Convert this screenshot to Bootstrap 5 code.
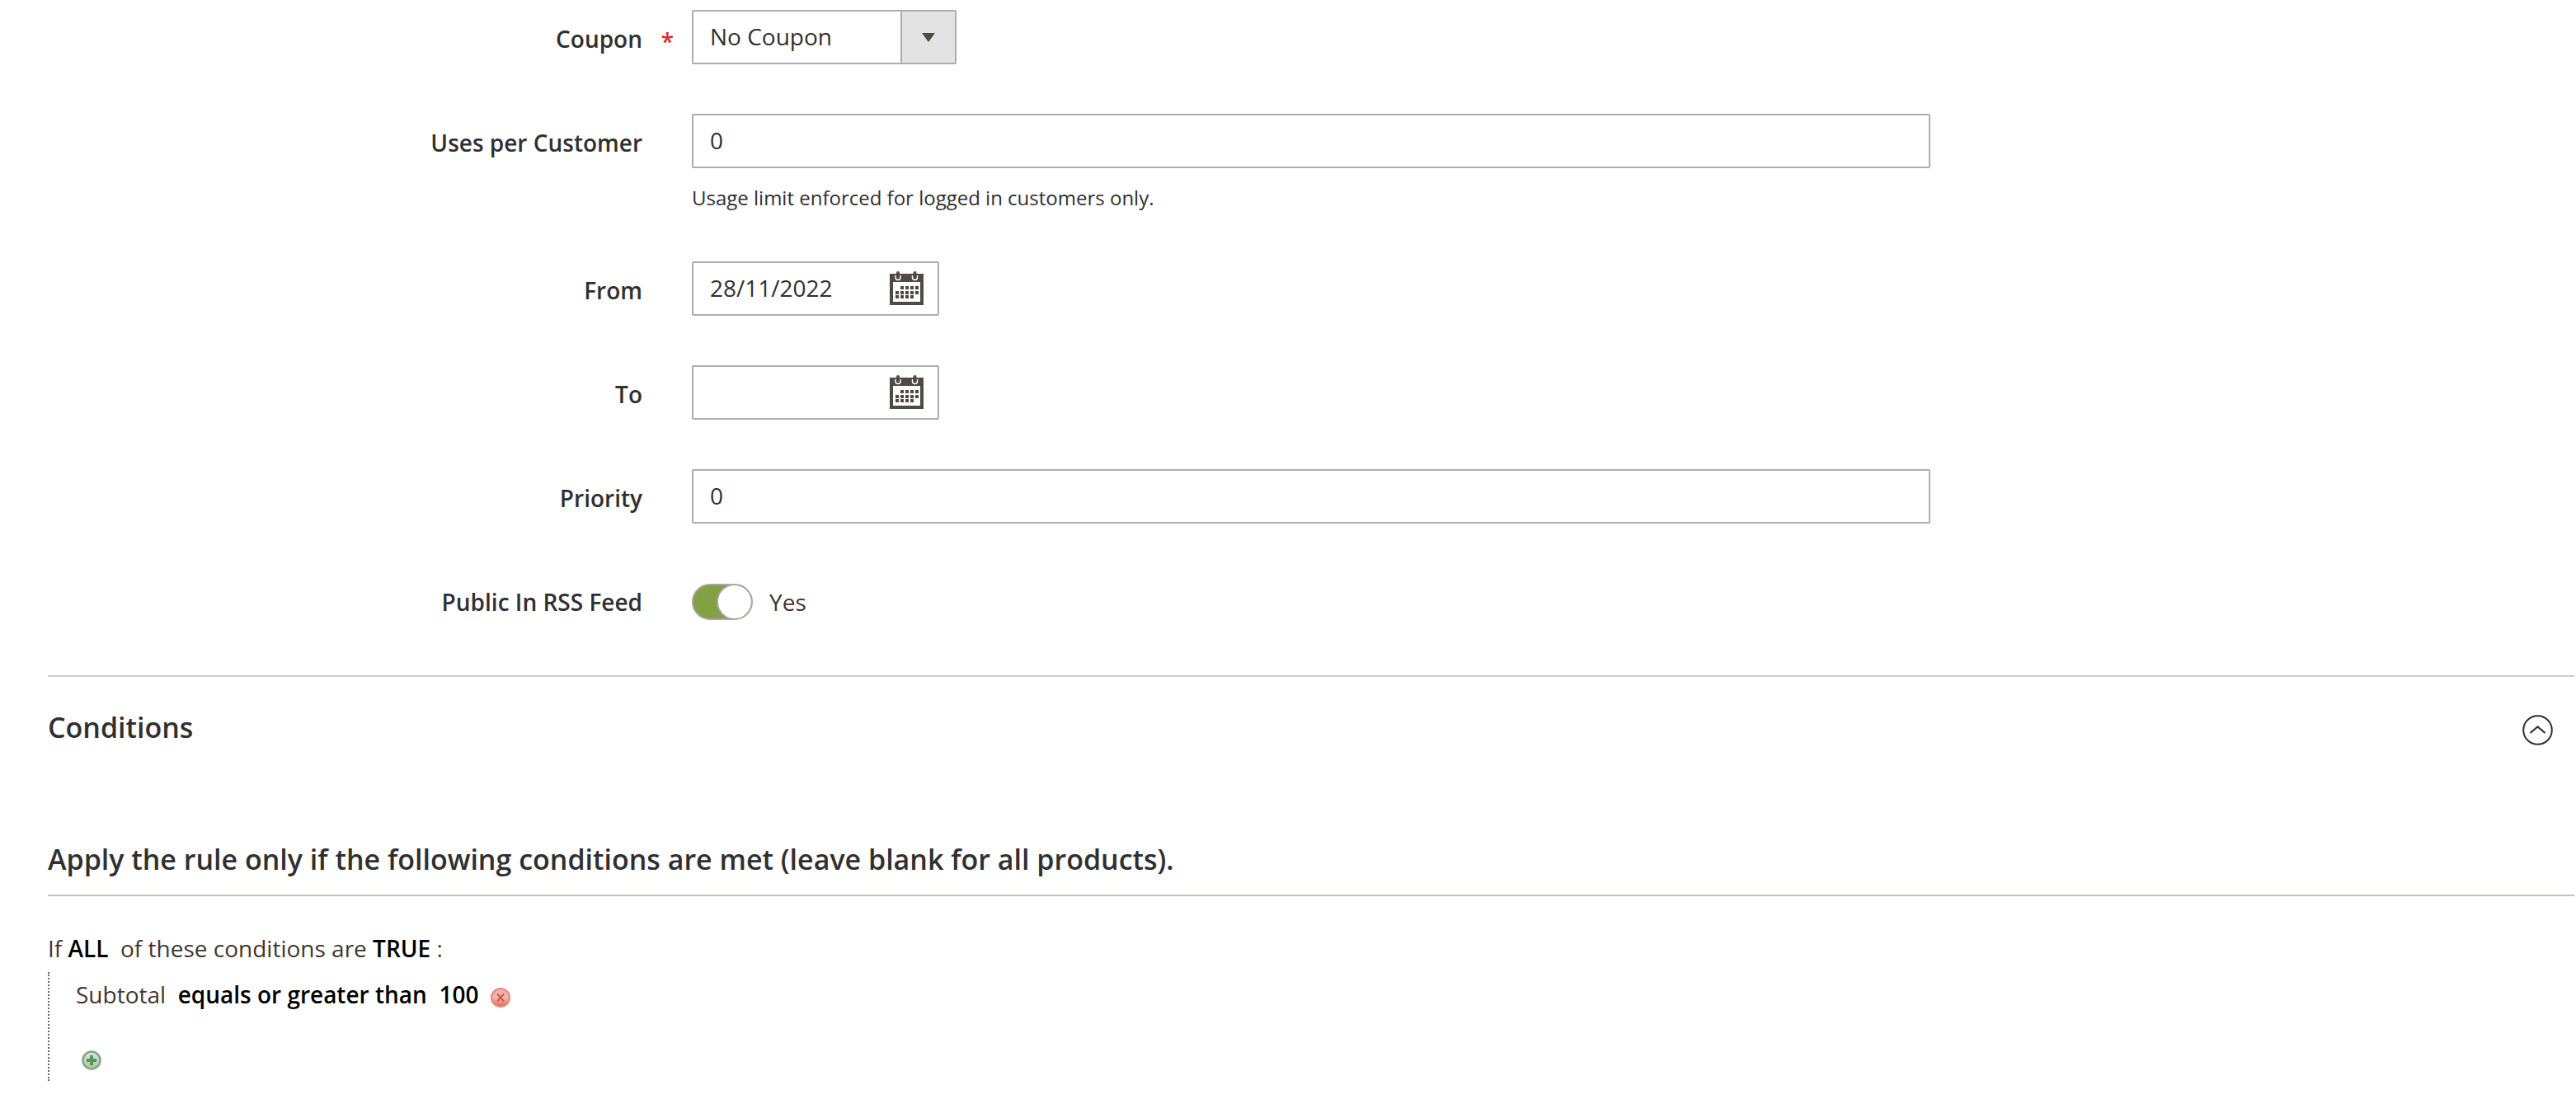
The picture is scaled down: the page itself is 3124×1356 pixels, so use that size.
<!DOCTYPE html>
<html lang="en">
<head>
<meta charset="utf-8">
<meta name="viewport" content="width=device-width, initial-scale=1">
<title>Cart Price Rule</title>
<link href="https://cdn.jsdelivr.net/npm/bootstrap@5.3.0/dist/css/bootstrap.min.css" rel="stylesheet">
<style>
body{font-family:"Open Sans",sans-serif;font-size:28px;line-height:38px;color:#41362f;background:#fff}
.page-wrap{padding:12px 2px 40px 58px}
.rule-form{display:flex;flex-direction:column;gap:60px;padding-bottom:58px}
.rule-form .row{--bs-gutter-x:30px;margin:0}
.field-label{font-weight:600;color:#303030;text-align:right;line-height:66px;padding:2px 45px 0 15px;margin:0 0 -2px;position:relative}
.required-mark::after{content:"*";position:absolute;right:7px;top:5px;color:#e22626}
.field-box,.form-control.field-box,.form-select.field-box{height:66px;border:2px solid #adadad;border-radius:2px;color:#303030;font-size:28px;line-height:38px;padding:0 20px 2px;background-color:#fff}
.form-select.field-box{width:321px;background-image:url("data:image/svg+xml,%3Csvg xmlns='http://www.w3.org/2000/svg' viewBox='0 0 16 11'%3E%3Cpath d='M0 0h16L8 11z' fill='%23514943'/%3E%3C/svg%3E"),linear-gradient(90deg,#adadad 2px,#e3e3e3 2px);background-repeat:no-repeat;background-size:16px 11px,66px 100%;background-position:right 24px center,right center}
.date-box{display:flex;align-items:center;width:300px;padding-right:17px!important}
.date-box input{flex:1;min-width:0;border:0;outline:0;padding:0;color:#303030;background:none}
.icon-btn{border:0;background:none;padding:0;display:inline-flex}
.field-note{font-size:24px;line-height:34px;color:#303030;margin-top:19px}
.form-switch.toggle-row{padding:4px 0 0;margin:0;height:66px;display:flex;align-items:center;gap:20px}
.form-switch .form-check-input.toggle-input{margin:0;width:74px;height:44px;border:2px solid #aaa6a0;border-radius:22px;background-color:#81a143;background-image:url("data:image/svg+xml,%3Csvg xmlns='http://www.w3.org/2000/svg' viewBox='0 0 44 44'%3E%3Ccircle cx='22' cy='22' r='21' fill='%23fff' stroke='%23aaa6a0' stroke-width='2'/%3E%3C/svg%3E");background-size:44px 44px;background-origin:border-box;background-position:right center;box-shadow:none}
.section-head{border-top:2px solid #ccc;padding:42px 26px 0 0;height:124px;margin-bottom:60px}
.section-title,.legend-title{font-size:34px;line-height:46px;font-weight:600;color:#303030;margin:0}
.section-title{line-height:38px}
.legend-title{padding:16px 0 20px;border-bottom:2px solid #c8c3b0;margin-bottom:43px}
.rule-tree a{color:#000;font-weight:600;text-decoration:none}
.rule-tree{line-height:40px}
.rule-children{border-left:2px dotted #666;list-style:none;margin:9px 0 0;padding:7px 0 4px 32px}
.add-item{margin:41px 0 0 7px}
</style>
</head>
<body>
<svg class="d-none" aria-hidden="true">
<symbol id="calendar" viewBox="0 0 41 41">
<path fill="#514943" fill-rule="evenodd" d="M0 3h41v38H0zM4 13v24h33V13z"/>
<path d="M7 5v2.500a3 3 0 0 0 6 0V5M27.500 5v2.500a3 3 0 0 0 6 0V5" fill="none" stroke="#fff" stroke-width="1.500"/>
<path d="M10 2v5M30.500 2v5" stroke="#514943" stroke-width="4" stroke-linecap="round"/>
<path fill="#514943" d="M13 18h4v4h-4zM19 18h4v4h-4zM25 18h4v4h-4zM31 18h4v4h-4zM7 24h4v4H7zM13 24h4v4h-4zM19 24h4v4h-4zM25 24h4v4h-4zM31 24h4v4h-4zM7 29h4v4H7zM13 29h4v4h-4zM19 29h4v4h-4zM25 29h4v4h-4z"/>
</symbol>
</svg>
<main class="page-wrap">
<form class="rule-form">
<div class="row"><label class="col-3 field-label required-mark" for="coupon">Coupon</label>
<div class="col-6"><select class="form-select field-box" id="coupon"><option>No Coupon</option><option>Specific Coupon</option></select></div></div>
<div class="row"><label class="col-3 field-label" for="uses">Uses per Customer</label>
<div class="col-6"><input class="form-control field-box" id="uses" type="text" value="0"><div class="field-note">Usage limit enforced for logged in customers only.</div></div></div>
<div class="row"><label class="col-3 field-label" for="from">From</label>
<div class="col-6"><div class="field-box date-box"><input id="from" type="text" value="28/11/2022"><button class="icon-btn" type="button" aria-label="Select date"><svg width="41" height="41"><use href="#calendar"/></svg></button></div></div></div>
<div class="row"><label class="col-3 field-label" for="to">To</label>
<div class="col-6"><div class="field-box date-box"><input id="to" type="text"><button class="icon-btn" type="button" aria-label="Select date"><svg width="41" height="41"><use href="#calendar"/></svg></button></div></div></div>
<div class="row"><label class="col-3 field-label" for="priority">Priority</label>
<div class="col-6"><input class="form-control field-box" id="priority" type="text" value="0"></div></div>
<div class="row"><label class="col-3 field-label" for="rss">Public In RSS Feed</label>
<div class="col-6"><div class="form-check form-switch toggle-row"><input class="form-check-input toggle-input" type="checkbox" role="switch" id="rss" checked><span>Yes</span></div></div></div>
</form>
<section>
<div class="section-head d-flex justify-content-between align-items-start">
<h2 class="section-title">Conditions</h2>
<button class="icon-btn mt-1" type="button" aria-label="Collapse"><svg width="37" height="37" viewBox="0 0 37 37" fill="none" stroke="#303030" stroke-width="2"><circle cx="18.500" cy="18.500" r="17.300"/><path d="M9.500 22l9-7.500 9 7.500" stroke-width="2.200"/></svg></button>
</div>
<h3 class="legend-title">Apply the rule only if the following conditions are met (leave blank for all products).</h3>
<div class="rule-tree">
<div>If <a href="#">ALL</a>&nbsp; of these conditions are <a href="#">TRUE</a> :</div>
<ul class="rule-children">
<li>Subtotal&nbsp; <a href="#">equals or greater than</a>&nbsp; <a href="#">100</a>&nbsp; <button class="icon-btn align-middle" type="button" aria-label="Remove"><svg width="24" height="24" viewBox="0 0 24 24"><defs><linearGradient id="rg" x2="0" y2="1"><stop stop-color="#eeb0a8"/><stop offset=".5" stop-color="#f0b5ac"/><stop offset="1" stop-color="#e2685c"/></linearGradient></defs><circle cx="12" cy="12" r="11" fill="url(#rg)" stroke="#e08a80" stroke-width="2"/><path d="M8 7.500l8 9M16 7.500l-8 9" stroke="#cf5a50" stroke-width="2"/></svg></button></li>
<li class="add-item"><button class="icon-btn" type="button" aria-label="Add"><svg width="24" height="24" viewBox="0 0 24 24"><defs><linearGradient id="gg" x2="0" y2="1"><stop stop-color="#dce9dc"/><stop offset="1" stop-color="#a9c6a0"/></linearGradient></defs><circle cx="12" cy="12" r="10.500" fill="url(#gg)" stroke="#86a488" stroke-width="2.500"/><path d="M12 6v12M6 12h12" stroke="#55965f" stroke-width="4"/></svg></button></li>
</ul>
</div>
</section>
</main>
<script src="https://cdn.jsdelivr.net/npm/bootstrap@5.3.0/dist/js/bootstrap.bundle.min.js"></script>
</body>
</html>
